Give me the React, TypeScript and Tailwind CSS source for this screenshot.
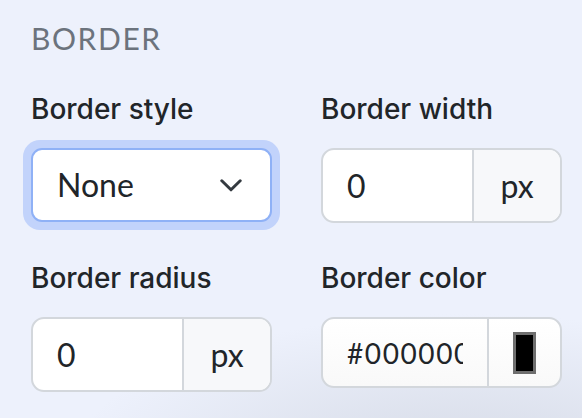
const font = { fontFamily: "Lato, 'Noto Sans', sans-serif" };

function Label({ children }: { children: React.ReactNode }) {
  return (
    <div className="mb-[22px] font-['Inter',sans-serif] text-[28px] leading-[34px] font-medium text-[#212529]">
      {children}
    </div>
  );
}

function UnitInput({ value }: { value: string }) {
  return (
    <div className="flex h-[75px] w-[241px] overflow-hidden rounded-[13px] border-2 border-[#d3d7dc] bg-white">
      <div className="flex flex-1 items-center pl-[24px] text-[32px] text-[#212529]">{value}</div>
      <div className="flex w-[88px] items-center justify-center border-l-2 border-[#d3d7dc] bg-[#f7f8fa] text-[32px] text-[#212529]">
        px
      </div>
    </div>
  );
}

export default function App() {
  return (
    <div
      className="relative h-[418px] w-[582px] overflow-hidden bg-[#edf1fc] pl-[31px] pt-[20px]"
      style={font}
    >
      <div className="pointer-events-none absolute inset-0 bg-[radial-gradient(ellipse_70%_40%_at_80%_115%,#d3d8e4_0%,rgba(211,216,228,0)_100%)]" />
      <div className="relative">
        <h2 className="text-[30px] leading-[36px] font-normal tracking-[1.6px] text-[#6c737d]">BORDER</h2>

        <div className="mt-[36px] grid grid-cols-[241px_241px] gap-x-[49px] gap-y-[38px]">
          <div>
            <Label>Border style</Label>
            <div className="-m-[8px] rounded-[17px] bg-[#c2d3fb] p-[8px]">
              <div className="flex h-[74px] items-center justify-between rounded-[11px] border-2 border-[#8fb1f6] bg-white pl-[24px] pr-[28px] text-[32px] text-[#212529]">
                <span>None</span>
                <svg width="22" height="13" viewBox="0 0 22 13" fill="none" className="text-[#343a40]">
                  <path d="M1.8 1.8L11 10.8L20.2 1.8" stroke="currentColor" strokeWidth="3" strokeLinecap="round" strokeLinejoin="round" />
                </svg>
              </div>
            </div>
          </div>

          <div>
            <Label>Border width</Label>
            <UnitInput value="0" />
          </div>

          <div>
            <Label>Border radius</Label>
            <UnitInput value="0" />
          </div>

          <div>
            <Label>Border color</Label>
            <div className="flex h-[71px] w-[241px] overflow-hidden rounded-[13px] border-2 border-[#d3d7dc] bg-gradient-to-b from-white to-[#f9f9f9]">
              <div className="flex w-[164px] items-center overflow-hidden pl-[24px] text-[28px] whitespace-nowrap text-[#212529]">
                <span className="w-[116px] overflow-hidden tracking-[1.6px]">#000000</span>
              </div>
              <div className="flex flex-1 items-center justify-center border-l-2 border-[#d3d7dc]">
                <div className="h-[42px] w-[23px] border-[3px] border-[#6e6e6e] bg-black" />
              </div>
            </div>
          </div>
        </div>
      </div>
    </div>
  );
}
